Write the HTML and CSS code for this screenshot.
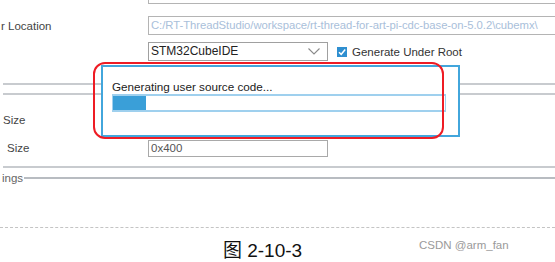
FILE: index.html
```html
<!DOCTYPE html>
<html>
<head>
<meta charset="utf-8">
<link rel="stylesheet" href="styles.css">
</head>
<body>
<div class="page">
  <div class="form">
    <div class="row row-cut">
      <span class="label">state</span>
      <span class="field wide">Basic</span>
    </div>
    <div class="row row-loc">
      <span class="label">r Location</span>
      <span class="field wide path">C:/RT-ThreadStudio/workspace/rt-thread-for-art-pi-cdc-base-on-5.0.2\cubemx\</span>
    </div>
    <div class="row row-ide">
      <span class="label"></span>
      <span class="field select">STM32CubeIDE
        <svg class="chev" width="12" height="7" viewBox="0 0 12 7"><path d="M0.5 0.5 L6 6 L11.5 0.5" fill="none" stroke="#8a8a8a" stroke-width="1.1"/></svg>
      </span>
      <span class="check">
        <svg width="10" height="10" viewBox="0 0 10 10"><rect width="10" height="10" fill="#2f8fd0"/><path d="M2 5.2 L4.2 7.3 L8.2 2.6" fill="none" stroke="#fff" stroke-width="1.5"/></svg>
        Generate Under Root
      </span>
    </div>
    <div class="sep sep-a"></div>
    <div class="sep sep-b"></div>
    <div class="row row-size1">
      <span class="label pad">Size</span>
      <span class="field small">0x200</span>
    </div>
    <div class="row row-size2">
      <span class="label indent">Size</span>
      <span class="field small">0x400</span>
    </div>
    <div class="sep sep-c"></div>
    <div class="group">
      <span class="group-title">ings</span>
      <span class="group-line"></span>
    </div>

    <div class="dialog">
      <div class="dialog-text">Generating user source code...</div>
      <div class="progress"><div class="progress-fill" style="width:33px"></div></div>
    </div>
    <div class="highlight"></div>
  </div>
  <div class="dash"></div>
  <div class="caption">
    <span class="caption-text">图 2-10-3</span>
    <span class="watermark">CSDN @arm_fan</span>
  </div>
</div>
</body>
</html>
```
FILE: styles.css
```css
* { box-sizing: border-box; }
html, body { margin: 0; padding: 0; background: #fff; }
body {
  width: 555px;
  height: 262px;
  overflow: hidden;
  font-family: "Liberation Sans", Arial, sans-serif;
  color: #444;
}
.page { width: 555px; }
.form {
  position: relative;
  margin-top: -14px;
  height: 241px;
}
.row {
  display: flex;
  align-items: center;
  height: 19px;
}
.label {
  width: 148px;
  flex: none;
  font-size: 11.5px;
  color: #444;
  padding-left: 1px;
  white-space: pre;
}
.label.pad { padding-left: 3px; }
.label.indent { padding-left: 7px; }
.field {
  height: 19px;
  border: 1px solid #a9a9a9;
  font-size: 11.5px;
  line-height: 17px;
  padding-left: 2px;
  color: #555;
  white-space: nowrap;
  overflow: hidden;
}
.wide { flex: 1; margin-right: -2px; border-color: #b4b4b4; }
.row-cut { height: 18px; }
.row-cut .field { height: 18px; color: #666; }
.row-loc { margin-top: 12px; }
.path { color: #a9c0da; font-size: 11.3px; letter-spacing: -0.05px; }
.row-ide { margin-top: 7px; }
.select {
  width: 180px;
  color: #222;
  font-size: 12px;
  display: flex;
  align-items: center;
  justify-content: space-between;
  padding-right: 7px;
  border-color: #a0a0a0;
}
.chev { flex: none; }
.check {
  display: flex;
  align-items: center;
  gap: 5px;
  margin-left: 9px;
  font-size: 11.5px;
  color: #333;
}
.sep {
  height: 2px;
  margin-left: 3px;
  background: #c8cbcf;
}
.sep-a { margin-top: 22px; }
.sep-b { margin-top: 8px; }
.row-size1 { margin-top: 15px; }
.row-size2 { margin-top: 10px; }
.small { width: 180px; height: 17px; line-height: 15px; }
.row-size2 .label { position: relative; top: -1px; }
.sep-c { margin-top: 8px; }
.group {
  display: flex;
  align-items: center;
  margin-top: 3px;
  height: 15px;
}
.group-title {
  font-size: 11.5px;
  color: #666;
  padding-left: 2px;
  line-height: 13px;
}
.group-line {
  flex: 1;
  height: 2px;
  background: #b8bcc1;
  margin-left: 1px;
  margin-top: -2px;
}
.dialog {
  position: absolute;
  left: 101px;
  top: 79px;
  width: 359px;
  height: 72px;
  border: 2px solid #42a6dc;
  background: #fff;
  padding: 13px 0 0 9px;
}
.dialog-text {
  font-size: 11.7px;
  color: #222;
  line-height: 14px;
}
.progress {
  margin-top: 0px;
  width: 334px;
  height: 18px;
  border: 1px solid #9fd0ee;
  border-width: 2px 1px;
  background: #fff;
}
.progress-fill {
  height: 100%;
  background: #3a9fd8;
}
.highlight {
  position: absolute;
  left: 93px;
  top: 76px;
  width: 351px;
  height: 77px;
  border: 2px solid #ee1c24;
  border-radius: 12px;
}
.dash {
  height: 0;
  border-top: 1px dashed #c4c4c4;
}
.caption {
  position: relative;
  height: 34px;
  text-align: center;
  padding-right: 30px;
  padding-top: 7px;
}
.caption-text {
  font-family: "Liberation Sans", "Noto Sans CJK SC", sans-serif;
  font-size: 19px;
  color: #111;
}
.watermark {
  position: absolute;
  left: 419px;
  top: 11px;
  font-size: 11.5px;
  color: #9a9a9a;
}
```
